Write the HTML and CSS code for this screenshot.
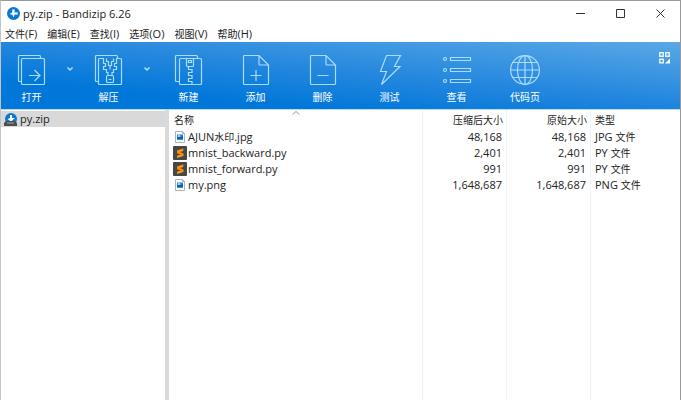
FILE: index.html
```html
<!DOCTYPE html>
<html lang="zh-CN">
<head>
<meta charset="utf-8">
<title>py.zip - Bandizip 6.26</title>
<link rel="stylesheet" href="styles.css">
</head>
<body>
<svg class="defs" aria-hidden="true">
  <symbol id="logo" viewBox="0 0 12 12"><circle cx="6" cy="6" r="6" fill="#0878d4"/><path d="M4.8 2.2h2.4L6.9 5l2.9-.2v2.4L7 6.9 6 9.8 5 7.2 2.2 6.4 4.8 5z" fill="#fff"/></symbol>
  <symbol id="image-file" viewBox="0 0 14 14"><path d="M2.500 1.500h7l2 2v9h-9z" fill="#fff" stroke="#a3b4c2"/><path d="M9.500 1.500v2h2" fill="none" stroke="#a3b4c2"/><path d="M4 4.500h6v5H4z" fill="#2288d8"/><path d="M4 8l2-1.500 1.500 1L10 6v3.500H4z" fill="#0b5fae"/><circle cx="6" cy="6" r="1" fill="#d7efff"/></symbol>
  <symbol id="script-file" viewBox="0 0 14 14"><rect width="14" height="14" rx="1" fill="#474747"/><path d="M4 4.600L10.300 2.500v2.400L6.300 6.200l4 1.200v2.500L4 12V9.700l4-1.300-4-1.300z" fill="#ff9c11"/><path d="M4 4.600l6.300 2.800v2.500L4 7.100z" fill="#f58a06"/></symbol>
</svg>
<div class="window">
  <header class="titlebar">
    <svg class="logo"><use href="#logo"/></svg>
    <h1 class="title">py.zip - Bandizip 6.26</h1>
    <div class="controls">
      <button class="control" aria-label="最小化"><svg viewBox="0 0 9 9"><path d="M0 4.500h9"/></svg></button>
      <button class="control" aria-label="最大化"><svg viewBox="0 0 9 9"><path d="M.5.5h8v8h-8z"/></svg></button>
      <button class="control" aria-label="关闭"><svg viewBox="0 0 9 9"><path d="M.5.5l8 8M8.500.5l-8 8"/></svg></button>
    </div>
  </header>
  <nav class="menu">
    <button>文件<span class="latin">(F)</span></button>
    <button>编辑<span class="latin">(E)</span></button>
    <button>查找<span class="latin">(I)</span></button>
    <button>选项<span class="latin">(O)</span></button>
    <button>视图<span class="latin">(V)</span></button>
    <button>帮助<span class="latin">(H)</span></button>
  </nav>
  <div class="toolbar">
    <button class="tool split"><svg class="icon" viewBox="0 0 30 32"><path d="M4.500 27.500h-2a1 1 0 0 1-1-1v-24a1 1 0 0 1 1-1h20a1 1 0 0 1 1 1v2"/><rect x="4.500" y="4.500" width="23" height="26" rx="1"/><path d="M12 21.500h11M17.500 16l5.500 5.500-5.500 5.500"/></svg>打开</button>
    <button class="more" aria-label="打开选项"><svg viewBox="0 0 6 4"><path d="M.5.500L3 3 5.500.5"/></svg></button>
    <button class="tool split"><svg class="icon" viewBox="0 0 30 32"><path d="M4.500 27.500h-2a1 1 0 0 1-1-1v-24a1 1 0 0 1 1-1h20a1 1 0 0 1 1 1v2"/><path d="M10 4.500H5.500a1 1 0 0 0-1 1v24a1 1 0 0 0 1 1h21a1 1 0 0 0 1-1v-24a1 1 0 0 0-1-1H22"/><path d="M9.500 4.500v5h2v3h-2v3h3v3h1.500v3M22.500 4.500v5h-2v3h2v3h-3v3H18v3M12.500 4.500v3h2v4h1.500v4M19.500 4.500v3h-2v4H16"/><rect x="12.500" y="21.500" width="7" height="7" rx="1"/><path d="M14.500 25.500h3"/></svg>解压</button>
    <button class="more" aria-label="解压选项"><svg viewBox="0 0 6 4"><path d="M.5.500L3 3 5.500.5"/></svg></button>
    <button class="tool"><svg class="icon" viewBox="0 0 30 32"><path d="M5.500 27.500h-3a1 1 0 0 1-1-1v-24a1 1 0 0 1 1-1h20a1 1 0 0 1 1 1v2"/><rect x="5.500" y="4.500" width="22" height="26" rx="1"/><path d="M12.500 4.500v7a1 1 0 0 0 1 1h5a1 1 0 0 0 1-1v-7M14.500 8.500h3v-2h-3zM14.500 12.500v3h3.500v3h-3.500v3h3.500v3h-3.500v3h3.500v3"/></svg>新建</button>
    <button class="tool"><svg class="icon" viewBox="0 0 30 32"><path d="M18 1.500H3.500a1 1 0 0 0-1 1v27a1 1 0 0 0 1 1h23a1 1 0 0 0 1-1V11zM18 1.500v8.500a1 1 0 0 0 1 1h8.500M9.500 21.500h11M15 16v11"/></svg>添加</button>
    <button class="tool"><svg class="icon" viewBox="0 0 30 32"><path d="M18 1.500H3.500a1 1 0 0 0-1 1v27a1 1 0 0 0 1 1h23a1 1 0 0 0 1-1V11zM18 1.500v8.500a1 1 0 0 0 1 1h8.500M9.500 21.500h11"/></svg>删除</button>
    <button class="tool"><svg class="icon" viewBox="0 0 30 32"><path d="M11.500 1.500h14l-6 11h5.500L6.500 30.500l5-13H5.500z"/></svg>测试</button>
    <button class="tool"><svg class="icon" viewBox="0 0 30 32"><path d="M8.500 3.500h20v3h-20zM8.500 14.500h20v3h-20zM8.500 25.500h20v3h-20z"/><circle cx="3" cy="5" r="1.500"/><circle cx="3" cy="16" r="1.500"/><circle cx="3" cy="27" r="1.500"/></svg>查看</button>
    <button class="tool wide"><svg class="icon" viewBox="0 0 30 32"><circle cx="15" cy="16" r="14.400"/><ellipse cx="15" cy="16" rx="7.500" ry="14.400"/><path d="M15 1.500v29M.5 16h29M3 8.500h24M3 23.500h24"/></svg>代码页</button>
    <button class="layout" aria-label="布局"><svg viewBox="0 0 11 12"><path d="M.75.75h3.500v3.500H.75zM6.750.75h3.500v3.500h-3.500zM.75 7.250h3.500v3.500H.75z"/><path class="solid" d="M11 6.500V11.500H6z"/></svg></button>
  </div>
  <main class="panes">
    <aside class="tree">
      <a class="node" href="#"><svg class="archive" viewBox="0 0 13 13"><circle cx="7" cy="6" r="6" fill="#0878d4"/><path d="M6 2h2v3h3L7 8.500 3.500 6 6 5z" fill="#fff"/><path d="M0 10l2-2h9l2 2v3H0z" fill="#464d53"/><path d="M3 10h7" stroke="#aaa"/></svg>py.zip</a>
    </aside>
    <section class="list">
      <table>
        <colgroup><col><col class="size"><col class="size"><col class="kind"></colgroup>
        <thead><tr><th>名称<svg class="sort" viewBox="0 0 8 4"><path d="M.5 3.500L4 .5l3.500 3"/></svg></th><th class="num">压缩后大小</th><th class="num">原始大小</th><th>类型</th></tr></thead>
        <tbody>
          <tr><td><div class="file"><svg><use href="#image-file"/></svg><span>AJUN<span class="cjk">水印</span>.jpg</span></div></td><td class="num">48,168</td><td class="num">48,168</td><td>JPG <span class="cjk">文件</span></td></tr>
          <tr><td><div class="file"><svg><use href="#script-file"/></svg><span>mnist_backward.py</span></div></td><td class="num">2,401</td><td class="num">2,401</td><td>PY <span class="cjk">文件</span></td></tr>
          <tr><td><div class="file"><svg><use href="#script-file"/></svg><span>mnist_forward.py</span></div></td><td class="num">991</td><td class="num">991</td><td>PY <span class="cjk">文件</span></td></tr>
          <tr><td><div class="file"><svg><use href="#image-file"/></svg><span>my.png</span></div></td><td class="num">1,648,687</td><td class="num">1,648,687</td><td>PNG <span class="cjk">文件</span></td></tr>
          <tr class="rest"><td></td><td></td><td></td><td></td></tr>
        </tbody>
      </table>
    </section>
  </main>
</div>
</body>
</html>
```
FILE: styles.css
```css
* { box-sizing: border-box; }
body {
  margin: 0;
  background: #fff;
  color: #222;
  font: 11px/16px "Open Sans", "Noto Sans CJK SC", sans-serif;
}
button {
  margin: 0;
  padding: 0;
  border: 0;
  background: none;
  color: inherit;
  font: inherit;
}
svg { display: block; fill: none; }
.defs { position: absolute; width: 0; height: 0; }
.cjk { font-size: 10px; }
.latin { font-size: 11px; }

.window {
  display: flex;
  flex-direction: column;
  height: 100vh;
  border: 1px solid #999;
  border-bottom: 0;
  border-left-color: #c4c4c4;
}

.titlebar { display: flex; align-items: center; height: 25px; padding-left: 6px; }
.logo { width: 13px; height: 13px; margin-right: 3px; }
.title { margin: 0; font-size: 11px; font-weight: 400; }
.controls { display: flex; margin-left: auto; }
.control { display: grid; place-items: center; width: 40px; height: 24px; }
.control svg { width: 9px; height: 9px; stroke: #333; }

.menu {
  display: flex;
  gap: 10px;
  height: 16px;
  padding-left: 4px;
  font-size: 10px;
  line-height: 16px;
}

.toolbar {
  display: flex;
  height: 68px;
  border-bottom: 1px solid #b9dcf6;
  background: linear-gradient(185deg, #5aa8e6 0%, #2487de 47%, #0077d9 78%);
  color: #fff;
}
.tool {
  display: flex;
  flex-direction: column;
  align-items: center;
  gap: 3px;
  width: 67px;
  padding-top: 12px;
  font-size: 10px;
}
.tool.split { width: 61px; }
.tool.wide { width: 70px; }
.icon { width: 30px; height: 32px; stroke: #a9dcff; stroke-width: 1.2; }
.more { width: 16px; padding-bottom: 14px; }
.more svg { width: 6px; height: 4px; margin: auto; stroke: #b9e2ff; stroke-width: 1.4; }
.layout { align-self: flex-start; margin: 10px 10px 0 auto; }
.layout svg { width: 11px; height: 12px; stroke: #e4f4ff; stroke-width: 1.4; }
.layout .solid { fill: #fff; stroke: none; }

.panes { display: flex; flex: 1; min-height: 0; }
.tree {
  width: 168px;
  padding-top: 1px;
  border-right: 4px solid #dadada;
}
.node {
  display: flex;
  align-items: center;
  gap: 3px;
  height: 16px;
  padding-left: 3px;
  background: #d9d9d9;
  color: inherit;
  text-decoration: none;
}
.archive { width: 13px; height: 13px; }

.list { flex: 1; min-width: 0; }
table { width: 100%; height: 100%; border-collapse: separate; border-spacing: 0; table-layout: fixed; }
.size { width: 84px; }
.kind { width: 89px; }
th, td {
  height: 16px;
  padding: 0 4px;
  border-right: 1px solid #edf4f9;
  text-align: left;
  white-space: nowrap;
  line-height: 16px;
}
th { position: relative; height: 19px; font-size: 10px; font-weight: 400; padding-left: 5px; }
th:last-child { padding-left: 4px; }
th:last-child, td:last-child { border-right: 0; }
th.num { padding-right: 3px; }
.num { text-align: right; }
.sort { position: absolute; top: 1px; left: 50%; width: 8px; height: 4px; margin-left: -4px; stroke: #999; }
.file { display: flex; align-items: center; gap: 1px; }
.file svg { width: 14px; height: 14px; }
.rest td { height: auto; }
```
